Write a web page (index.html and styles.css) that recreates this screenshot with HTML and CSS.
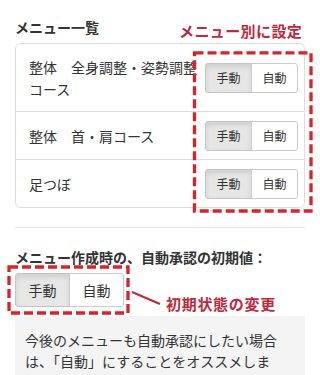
FILE: index.html
```html
<!DOCTYPE html>
<html lang="ja">
<head>
<meta charset="utf-8">
<link rel="stylesheet" href="styles.css">
</head>
<body>
<div class="page">
  <h2 class="title">メニュー一覧</h2>
  <div class="card">
    <div class="row">
      <div class="label">整体　全身調整・姿勢調整コース</div>
      <div class="btn-group sm"><span class="btn active">手動</span><span class="btn">自動</span></div>
    </div>
    <div class="row">
      <div class="label">整体　首・肩コース</div>
      <div class="btn-group sm"><span class="btn active">手動</span><span class="btn">自動</span></div>
    </div>
    <div class="row">
      <div class="label">足つぼ</div>
      <div class="btn-group sm"><span class="btn active">手動</span><span class="btn">自動</span></div>
    </div>
  </div>
  <div class="sep"></div>
  <h2 class="title t2">メニュー作成時の、自動承認の初期値：</h2>
  <div class="btn-group lg"><span class="btn active">手動</span><span class="btn">自動</span></div>
  <div class="note">今後のメニューも自動承認にしたい場合は、「自動」にすることをオススメしま</div>

  <div class="anno-label a1">メニュー別に設定</div>
  <svg class="anno-svg" width="320" height="375" viewBox="0 0 320 375">
    <rect x="194.5" y="52.8" width="116.5" height="158.2" fill="none" stroke="#d9232b" stroke-width="3.3" stroke-dasharray="9 4"/>
    <rect x="9" y="267" width="119" height="46" fill="none" stroke="#d9232b" stroke-width="3.3" stroke-dasharray="9 4"/>
    <line x1="132" y1="292" x2="160" y2="304" stroke="#c0283c" stroke-width="2"/>
  </svg>
  <div class="anno-label a2">初期状態の変更</div>
</div>
</body>
</html>
```
FILE: styles.css
```css
html, body {
  margin: 0;
  padding: 0;
  overflow: hidden;
  background: #fff;
}
body {
  font-family: "Noto Sans CJK JP", "Noto Sans", sans-serif;
  color: #333;
  font-size: 14px;
}
.page {
  position: relative;
  width: 320px;
  height: 375px;
  padding: 17px 15px 0 15px;
  box-sizing: border-box;
  overflow: hidden;
}
.title {
  margin: 0;
  font-size: 14px;
  line-height: 20px;
  font-weight: bold;
  color: #333;
}
.card {
  margin-top: 6px;
  border: 1px solid #dddddd;
  border-radius: 6px;
}
.row {
  display: flex;
  align-items: center;
  padding: 8.5px 6px 8.5px 13px;
}
.row + .row {
  border-top: 1px solid #dddddd;
}
.label {
  flex: 1;
  min-width: 0;
  padding: 3px 0;
  line-height: 22px;
  font-size: 14px;
}
.btn-group {
  display: inline-flex;
  flex-shrink: 0;
}
.btn {
  display: inline-block;
  border: 1px solid #cccccc;
  background: #fff;
  color: #333;
  text-align: center;
  white-space: nowrap;
}
.btn + .btn {
  margin-left: -1px;
}
.btn:first-child {
  border-radius: 3px 0 0 3px;
}
.btn:last-child {
  border-radius: 0 3px 3px 0;
}
.btn.active {
  background: #e6e6e6;
  border-color: #c4c4c4;
  box-shadow: inset 0 3px 5px rgba(0, 0, 0, 0.1);
}
.sm .btn {
  font-size: 12px;
  line-height: 18px;
  padding: 5px 10.5px;
}
.lg {
  margin-top: 6px;
}
.lg .btn {
  font-size: 14px;
  line-height: 20px;
  padding: 6px 12.5px;
}
.sep {
  margin-top: 19px;
  height: 1px;
  background: #e6e6e6;
}
.t2 {
  margin-top: 19px;
}
.note {
  margin-top: 9px;
  background: #f4f4f4;
  padding: 14px 20px 14px 10px;
  font-size: 14px;
  line-height: 20.5px;
  color: #333;
}
.anno-svg {
  position: absolute;
  left: 0;
  top: 0;
  pointer-events: none;
}
.anno-label {
  position: absolute;
  color: #c0283c;
  font-weight: bold;
  font-size: 15px;
  line-height: 20px;
  white-space: nowrap;
}
.a1 {
  left: 179px;
  top: 21px;
  letter-spacing: 0.4px;
}
.a2 {
  left: 166px;
  top: 294px;
  letter-spacing: 0.7px;
}
```
